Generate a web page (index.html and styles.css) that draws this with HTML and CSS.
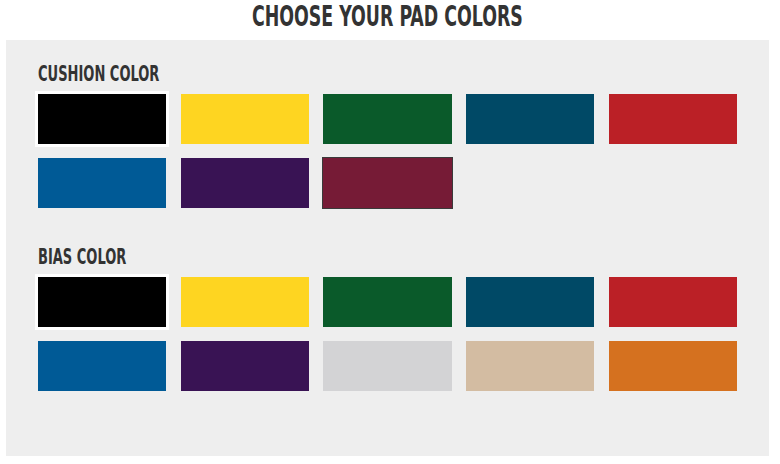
FILE: index.html
```html
<!DOCTYPE html>
<html lang="en">
<head>
  <meta charset="UTF-8">
  <title>Choose Your Pad Colors</title>
  <link rel="stylesheet" href="styles.css">
</head>
<body>

<h1 class="title"><span class="narrow">Choose Your Pad Colors</span></h1>

<div class="panel">
  <h2 class="group-title"><span class="narrow">Cushion Color</span></h2>
  <div class="swatches">
    <div class="swatch selected" style="background:#000000"></div>
    <div class="swatch" style="background:#fed521"></div>
    <div class="swatch" style="background:#0a5a2a"></div>
    <div class="swatch" style="background:#004966"></div>
    <div class="swatch" style="background:#bb2026"></div>
    <div class="swatch" style="background:#005a96"></div>
    <div class="swatch" style="background:#391354"></div>
    <div class="swatch hover" style="background:#761b36"></div>
  </div>

  <h2 class="group-title"><span class="narrow">Bias Color</span></h2>
  <div class="swatches">
    <div class="swatch selected" style="background:#000000"></div>
    <div class="swatch" style="background:#fed521"></div>
    <div class="swatch" style="background:#0a5a2a"></div>
    <div class="swatch" style="background:#004966"></div>
    <div class="swatch" style="background:#bb2026"></div>
    <div class="swatch" style="background:#005a96"></div>
    <div class="swatch" style="background:#391354"></div>
    <div class="swatch" style="background:#d3d3d5"></div>
    <div class="swatch" style="background:#d3bca2"></div>
    <div class="swatch" style="background:#d5711f"></div>
  </div>
</div>

</body>
</html>
```

FILE: styles.css
```css
body {
  margin: 0;
  padding: 0 11px 8px 6px;
  background: #fff;
  font-family: "DejaVu Sans Condensed", "DejaVu Sans", sans-serif;
  color: #333;
}
.narrow {
  display: inline-block;
  transform: scaleX(0.69);
  transform-origin: left center;
  white-space: nowrap;
}
.title {
  margin: 0;
  height: 40px;
  line-height: 33px;
  text-align: center;
  font-size: 28px;
  font-weight: bold;
  text-transform: uppercase;
}
.title .narrow {
  transform-origin: center center;
}
.panel {
  background: #eeeeee;
  height: 416px;
  box-sizing: border-box;
  padding: 22px 32px 0 32px;
}
.group-title {
  margin: 0 0 8px 0;
  font-size: 21px;
  line-height: 24px;
  font-weight: bold;
  text-transform: uppercase;
}
.swatches {
  display: grid;
  grid-template-columns: repeat(5, 1fr);
  column-gap: 14.25px;
  row-gap: 14px;
  margin-bottom: 37px;
}
.swatch {
  height: 50px;
  cursor: pointer;
}
.swatch.selected {
  outline: 3px solid #fff;
}
.swatch.hover {
  outline: 1px solid #3a3a3a;
}
```
